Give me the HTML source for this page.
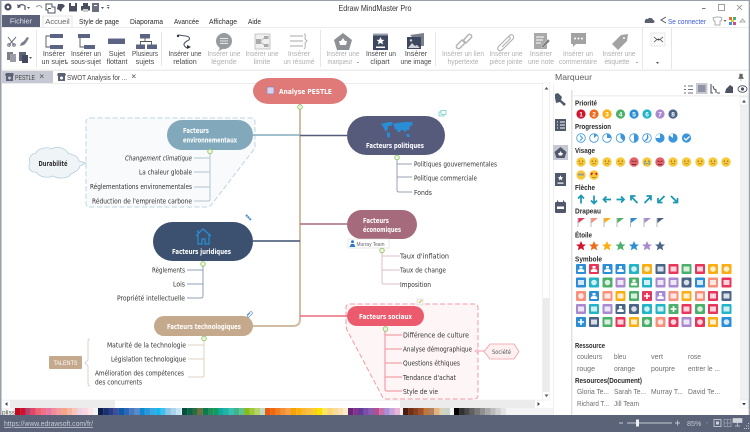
<!DOCTYPE html>
<html><head><meta charset="utf-8"><style>
html,body{margin:0;padding:0;background:#fff;width:750px;height:432px;overflow:hidden}
svg{display:block;filter:blur(.35px)}
text{font-family:"Liberation Sans",sans-serif}
.r{font-size:7.2px;fill:#4a4a4a;text-anchor:middle}
.g{font-size:7.2px;fill:#b0b0b0;text-anchor:middle}
.m{font-size:7.6px;fill:#2a2a2a}
.c{font-family:"DejaVu Sans",sans-serif;font-size:7px;fill:#333}
.w{font-family:"DejaVu Sans",sans-serif;font-size:7px;fill:#fff;font-weight:bold}
.l{font-size:7.4px;fill:#2a2a2a;font-weight:bold}
.i{font-size:7.4px;fill:#6e6e6e}
.ln{fill:none;stroke-width:1}
</style></head><body>
<svg width="750" height="432" viewBox="0 0 750 432" xmlns="http://www.w3.org/2000/svg">
<defs>
<g id="st"><polygon points="0,-5 1.5,-1.6 5,-1.4 2.3,.8 3.2,4.4 0,2.4 -3.2,4.4 -2.3,.8 -5,-1.4 -1.5,-1.6"/></g>
<g id="face"><circle r="4.7" fill="#f9c93c"/><circle cx="-1.7" cy="-.8" r=".7" fill="#8a6a20"/><circle cx="1.7" cy="-.8" r=".7" fill="#8a6a20"/><path d="M-2 1.8H2" stroke="#a07a20" stroke-width=".7"/></g>
<g id="pg"><circle r="4.3" fill="#fff" stroke="#3a95dc" stroke-width=".8"/></g>
<g id="sq"><rect x="-5" y="-5" width="10" height="10" rx="1"/></g>
<path id="person" d="M-1.5-3h3v2.500h-3zM-3.200 1l2-1h2.400l2 1v2h-6.400z" fill="#fff"/>
<path id="plus" d="M-3-.8H-.8V-3H.8V-.8H3V.8H.8V3H-.8V.8H-3z" fill="#fff"/>
<path id="box" d="M-3-2.500H3V2.500H-3z" fill="#fff" opacity=".8"/>
<circle id="dot" r="2.800" fill="#fff" opacity=".8"/>
</defs>

<!-- frame -->
<rect width="750" height="432" fill="#fff"/>
<rect width="750" height="1" fill="#9a9eab"/>
<rect width="1.500" height="415" fill="#9a9eab"/>
<rect x="748.700" width="1.300" height="415" fill="#9a9eab"/>

<!-- quick access -->
<g fill="#4a5060">
<circle cx="8" cy="7" r="3.600"/><circle cx="8" cy="7" r="1.300" fill="#fff"/>
<path d="M18 8c1-4 5-4 7-2v4" fill="none" stroke="#4a5060" stroke-width="1.200"/><path d="M17 4l1 4 3-1z"/>
<path d="M27 7h3l-1.500 2z"/>
<path d="M42 8c-1-3-4-3-6-1" fill="none" stroke="#9a9a9a" stroke-width="1"/>
<path d="M46 4h6v3h3v6h-7v-3h-2z" fill="none" stroke="#4a5060"/><path d="M48 8h3v1h-3z"/>
<path d="M58 4h5l2 2-3 3-1 3-2-2-2-1z"/>
<rect x="69" y="3" width="8" height="8.500"/><rect x="71" y="3" width="4" height="3" fill="#fff"/>
<rect x="81" y="6" width="9" height="4.500"/><rect x="83" y="3" width="5" height="3"/><rect x="83" y="9" width="5" height="3" fill="#ccc"/>
<rect x="92" y="3" width="7" height="9" fill="#6a7080"/><rect x="94" y="5" width="3" height="1" fill="#fff"/>
<path d="M101 7h3l-1.500 2zM107 7h2.500l-1.200 2z"/><rect x="107" y="5" width="2.500" height=".7"/>
</g>
<text x="375" y="11" font-size="8.200" fill="#333" text-anchor="middle" textLength="73" lengthAdjust="spacingAndGlyphs">Edraw MindMaster Pro</text>
<rect x="702" y="8" width="3.500" height="1" fill="#777"/>
<rect x="718.500" y="4.500" width="6" height="6" fill="none" stroke="#888" stroke-width=".8"/>
<path d="M737 5l5 5M742 5l-5 5" stroke="#888" stroke-width=".8"/>

<!-- menu -->
<rect x="2" y="15" width="38" height="12" fill="#5a6178"/>
<text x="21" y="23.500" font-size="7.400" fill="#dfe1e8" text-anchor="middle">Fichier</text>
<path d="M43 27V16h29v11" fill="#fff" stroke="#dcdcdc" stroke-width=".8"/>
<text x="57.500" y="24" class="m" text-anchor="middle" style="fill:#666">Accueil</text>
<text x="79" y="24" class="m" textLength="40" lengthAdjust="spacingAndGlyphs">Style de page</text>
<text x="130" y="24" class="m" textLength="33" lengthAdjust="spacingAndGlyphs">Diaporama</text>
<text x="174" y="24" class="m" textLength="25" lengthAdjust="spacingAndGlyphs">Avancée</text>
<text x="209" y="24" class="m" textLength="28" lengthAdjust="spacingAndGlyphs">Affichage</text>
<text x="248" y="24" class="m" textLength="13" lengthAdjust="spacingAndGlyphs">Aide</text>

<!-- top right -->
<path d="M645 23c-1-3 1-5 3-4 1-2 5-1 5 1 2 0 2 3 0 3z" fill="#5a6070"/>
<path d="M666 17l-5 3 5 3" fill="none" stroke="#555" stroke-width="1"/>
<text x="668" y="24" font-size="7.600" fill="#3c5ae0" textLength="38" lengthAdjust="spacingAndGlyphs">Se connecter</text>
<path d="M713 18l3-1h3l3 1-1 3h-1v4h-5v-4h-1z" fill="none" stroke="#999" stroke-width=".8"/>
<path d="M723.500 20h3l-1.500 2z" fill="#666"/>
<g><rect x="729" y="17" width="3" height="3" fill="#e86a3a"/><rect x="733" y="17" width="3" height="3" fill="#4cb06a"/><rect x="731" y="20" width="3" height="2" fill="#e8c23a"/><rect x="729" y="22" width="3" height="3" fill="#3a95dc"/><rect x="733" y="22" width="3" height="3" fill="#d04a8a"/></g>
<path d="M740 22l2.500-3 2.500 3z" fill="none" stroke="#999" stroke-width=".8"/>

<!-- ribbon -->
<rect x="1.500" y="27" width="747" height="1" fill="#ececec"/>
<rect x="1.500" y="69.500" width="747" height="1.500" fill="#ececec"/>
<g fill="#e6e6e6"><rect x="36" y="30" width="1" height="37"/><rect x="161" y="32" width="1" height="34"/><rect x="320" y="30" width="1" height="37"/><rect x="435" y="32" width="1" height="34"/><rect x="642" y="28" width="1" height="41"/><rect x="671" y="28" width="1" height="41"/></g>

<!-- clipboard -->
<path d="M8 37l6 8M16 37l-7 8" stroke="#6a7080" stroke-width="1" fill="none"/><circle cx="9" cy="45" r="1.300" fill="none" stroke="#6a7080"/><circle cx="14" cy="45" r="1.300" fill="none" stroke="#6a7080"/>
<path d="M27 37l-3 4-3 2-1 3 4-1 2-2 3-5z" fill="#7a8090"/>
<rect x="7" y="52" width="6" height="8" fill="#7c7f88"/><rect x="10" y="54" width="6" height="8" fill="#9a9da6"/>
<rect x="19" y="52" width="7" height="9" fill="#5d6478"/><rect x="22" y="55" width="6" height="8" fill="#434a60"/><path d="M29 57h3l-1.500 2z" fill="#555"/>

<!-- sujet icons -->
<g fill="#5c6484">
<rect x="50" y="34" width="13" height="4"/><rect x="50" y="45" width="13" height="4"/><path d="M50 36H46V47H50" fill="none" stroke="#555" stroke-width=".9"/>
<rect x="78" y="34" width="12" height="4"/><rect x="84" y="45" width="11" height="4"/><path d="M80 38V47H84" fill="none" stroke="#555" stroke-width=".9"/>
<rect x="108" y="38.500" width="17" height="5.500"/>
<rect x="140" y="34" width="10" height="4.500"/><rect x="136" y="44.500" width="9" height="4.500"/><rect x="147" y="44.500" width="10" height="4.500"/><path d="M145 38V42M140.500 44.500V41.500H151.500V44.500" fill="none" stroke="#555" stroke-width=".9"/>
</g>
<path d="M178 35c3 0 5 1 8 1 5 1 4 4 1 5-3 2-5 4 0 7" fill="none" stroke="#4c5264" stroke-width="1.100"/><circle cx="178" cy="36" r="1.200" fill="#333"/><path d="M191 47l-4-2 0 4z" fill="#333"/>
<circle cx="224" cy="41" r="8" fill="#979a9f"/><path d="M220 46l-1 5 5-3z" fill="#979a9f"/><path d="M220 38.500h8M220 41h8M220 43.500h8" stroke="#fff" stroke-width=".8"/>
<rect x="255" y="34" width="15" height="15" fill="#f0f0f0" stroke="#bbb" stroke-width=".8"/><rect x="264" y="36" width="4.500" height="3" fill="#aaa"/><rect x="264" y="44" width="4.500" height="3" fill="#aaa"/><rect x="256" y="39" width="5" height="5" fill="#aaa"/><path d="M261 41l3-3M261 42l3 3" stroke="#aaa" stroke-width=".7"/>
<path d="M290 36h13M290 41h13M290 46h13M304 34c2 0 1 3 1 5l2 2-2 2c0 2 1 5-1 6" fill="none" stroke="#a9a9a9" stroke-width=".9"/>
<path d="M343 33l9 7-3 10h-12l-3-10z" fill="#8d9094"/><path d="M343 38l2 3 2 0-1 4h-6l-1-4 2 0z" fill="#fff"/>
<rect x="373" y="35" width="15" height="15" fill="#3d4760"/><rect x="373" y="33.500" width="15" height="2" fill="#9aa0ae"/><use href="#st" fill="#fff" transform="translate(380.500 41) scale(.8)"/><rect x="376" y="46.500" width="9" height="1.500" fill="#fff"/>
<path d="M410 35l14-2v13h-3z" fill="#7a808c"/><rect x="407" y="37" width="14" height="12" fill="#3d4760"/><path d="M408 48l4-5 3 3 2-1 3 3z" fill="#cfd3dc"/><circle cx="411" cy="40.500" r="1.200" fill="#cfd3dc"/>
<g fill="none" stroke="#b4b4b4" stroke-width="1.500" stroke-linecap="round"><path d="M457 45l5-5 3 3-5 5c-2 2-5-1-3-3zM463 41l5-6c2-2 5 1 3 3l-5 5-3-3"/></g>
<path d="M499 46l10-10c3-3 6 0 4 3l-11 11c-3 2-6-1-3-4l9-9c1-1 3 1 2 2l-8 8" fill="none" stroke="#b0b0b0" stroke-width="1.100"/>
<rect x="534" y="33" width="13" height="16" fill="#a9a9a9"/><path d="M536 37h8M536 40h7M536 43h5" stroke="#fff" stroke-width=".9"/><path d="M541 47l7-8 2 2-7 7z" fill="#7c7c7c" stroke="#fff" stroke-width=".4"/>
<path d="M571 33h15v11h-10l-3 3v-3h-2z" fill="#a2a2a2"/><g fill="#fff"><circle cx="575" cy="38.500" r="1"/><circle cx="578.500" cy="38.500" r="1"/><circle cx="582" cy="38.500" r="1"/></g>
<path d="M628 34l-1 7-9 9-6-6 9-9z" fill="#a2a2a2"/><circle cx="624" cy="38" r="1" fill="#fff"/>
<rect x="651" y="33" width="14" height="13" fill="#fafafa" stroke="#e0e0e0" stroke-width=".7"/><path d="M654 37l3 2.500 3 0 3-2.500M654 42l3-2.500M663 42l-3-2.500" stroke="#444" stroke-width=".8" fill="none"/><circle cx="658.500" cy="39.500" r="1" fill="#444"/>
<path d="M656 62h3l-1.500 2z" fill="#555"/>

<!-- ribbon labels -->
<text class="r" x="54" y="56">Insérer</text><text class="r" x="54" y="64" textLength="25" lengthAdjust="spacingAndGlyphs">un sujet</text><rect x="66" y="62.500" width="2" height="1" fill="#555"/>
<text class="r" x="86" y="56" textLength="30" lengthAdjust="spacingAndGlyphs">Insérer un</text><text class="r" x="86" y="64" textLength="30" lengthAdjust="spacingAndGlyphs">sous-sujet</text>
<text class="r" x="117" y="56">Sujet</text><text class="r" x="117" y="64" textLength="21" lengthAdjust="spacingAndGlyphs">flottant</text>
<text class="r" x="145" y="56" textLength="26" lengthAdjust="spacingAndGlyphs">Plusieurs</text><text class="r" x="145" y="64">sujets</text>
<text class="r" x="185" y="56" textLength="33" lengthAdjust="spacingAndGlyphs">Insérer une</text><text class="r" x="185" y="64">relation</text>
<text class="g" x="224" y="56" textLength="33" lengthAdjust="spacingAndGlyphs">Insérer une</text><text class="g" x="224" y="64">légende</text>
<text class="g" x="262" y="56" textLength="33" lengthAdjust="spacingAndGlyphs">Insérer une</text><text class="g" x="262" y="64">limite</text>
<text class="g" x="299" y="56">Insérer</text><text class="g" x="299" y="64" textLength="31" lengthAdjust="spacingAndGlyphs">un résumé</text>
<text class="g" x="343" y="56" textLength="33" lengthAdjust="spacingAndGlyphs">Insérer une</text><text class="g" x="340" y="64" textLength="25" lengthAdjust="spacingAndGlyphs">marqueur</text><rect x="357" y="62" width="2" height="1" fill="#aaa"/>
<text class="r" x="381" y="56" textLength="30" lengthAdjust="spacingAndGlyphs">Insérer un</text><text class="r" x="380" y="64">clipart</text>
<text class="r" x="416" y="56">Insérer</text><text class="r" x="416" y="64" textLength="31" lengthAdjust="spacingAndGlyphs">une image</text>
<text class="g" x="463" y="56" textLength="42" lengthAdjust="spacingAndGlyphs">Insérer un lien</text><text class="g" x="463" y="64" textLength="31" lengthAdjust="spacingAndGlyphs">hypertexte</text>
<text class="g" x="506" y="56" textLength="33" lengthAdjust="spacingAndGlyphs">Insérer une</text><text class="g" x="506" y="64" textLength="33" lengthAdjust="spacingAndGlyphs">pièce jointe</text>
<text class="g" x="541" y="56">Insérer</text><text class="g" x="541" y="64" textLength="26" lengthAdjust="spacingAndGlyphs">une note</text>
<text class="g" x="578" y="56" textLength="30" lengthAdjust="spacingAndGlyphs">Insérer un</text><text class="g" x="578" y="64" textLength="38" lengthAdjust="spacingAndGlyphs">commentaire</text>
<text class="g" x="619" y="56" textLength="33" lengthAdjust="spacingAndGlyphs">Insérer une</text><text class="g" x="617" y="64" textLength="25" lengthAdjust="spacingAndGlyphs">étiquette</text><rect x="636" y="62" width="2" height="1" fill="#aaa"/>

<!-- doc tabs -->
<rect x="2" y="71" width="51" height="12" fill="#c6c9d3"/>
<path d="M6 73h7l1 2-1 1v5H6v-5l-1-1z" fill="#5b6275"/><circle cx="9.500" cy="78" r="1.500" fill="#c6c9d3"/>
<text x="15" y="80" font-size="7.200" fill="#444" textLength="20" lengthAdjust="spacingAndGlyphs">PESTLE</text>
<path d="M40 74.500l3.500 3.500M43.500 74.500L40 78" stroke="#555" stroke-width=".7"/>
<path d="M58 73h7l1 2-1 1v5h-7v-5l-1-1z" fill="#5b6275"/><circle cx="61.500" cy="78" r="1.500" fill="#fff"/>
<text x="67" y="80" font-size="7.400" fill="#444" textLength="60" lengthAdjust="spacingAndGlyphs">SWOT Analysis for ...</text>
<path d="M132 74.500l3.500 3.500M135.500 74.500L132 78" stroke="#555" stroke-width=".7"/>
<rect x="1.500" y="83" width="541" height=".8" fill="#e8e8e8"/>

<!-- Panel title -->
<text x="555" y="80" font-size="8.600" fill="#5c5c5c" textLength="37" lengthAdjust="spacingAndGlyphs">Marqueur</text>
<path d="M739.500 74h3v3l1 1v.6h-5V78l1-1zM741 79v2" fill="#666" stroke="#666" stroke-width=".4"/>

<!-- ===== Canvas ===== -->
<path d="M90 118H251q4 0 4 4V148L212 204q-2 3-5 3H90q-4 0-4-4V122q0-4 4-4z" fill="#f8fafb" stroke="#bcd5e3" stroke-width="1" stroke-dasharray="5 2.500"/>
<path d="M350 304H474q4 0 4 4V395q0 4-4 4H386q-3 0-4-3L347 330q-1-3-1-5V308q0-4 4-4z" fill="#fef6f6" stroke="#f29aa5" stroke-width="1" stroke-dasharray="5 2.500"/>

<path d="M300 104V319q0 7-7 7H253" fill="none" stroke="#d2bca4" stroke-width="2"/>
<path d="M253 135H300" stroke="#84abbd" stroke-width="1.500"/>
<path d="M300 135.500H347" stroke="#565b7c" stroke-width="1.500"/>
<path d="M300 224H347" stroke="#a56b7c" stroke-width="1.500"/>
<path d="M253 241H300" stroke="#3c5170" stroke-width="1.500"/>
<path d="M300 316H347" stroke="#ec6b7c" stroke-width="1.500"/>

<path class="ln" stroke="#afc5d0" d="M210 153V199q0 2-2 2H194M194 158H210M194 172H210M194 187H210"/>
<path class="ln" stroke="#9aa0b6" d="M397 160V190q0 2 2 2H412M397 164H412M397 177H412"/>
<path class="ln" stroke="#dcbfc9" d="M382 252V282q0 2 2 2H400M382 256H400M382 270H400"/>
<path class="ln" stroke="#f08a96" d="M385 331V389q0 2 2 2H402M385 335H402M385 349H402M385 363H402M385 377H402"/>
<path class="ln" stroke="#8f9fb4" d="M203 266V296q0 2-2 2H187M187 270H203M187 284H203"/>
<path class="ln" stroke="#e0d3c3" d="M204 340V375q0 2-2 2H188M188 345H204M188 359H204"/>
<path class="ln" stroke="#d9d2c8" d="M90 339q-2 0-2 3V360l-3 3 3 3V383q0 3 2 3"/>
<path d="M478 351H484" stroke="#f29aa5" stroke-width="1"/><path d="M478 349l-3 2 3 2" fill="none" stroke="#f29aa5" stroke-width=".7"/>

<path d="M86 163L79 161C78 155 72 155 68 153C64 147 56 146 52 149C47 146 37 149 36 153C31 154 28 158 30 163C27 168 31 173 36 172C40 178 49 178 53 176C58 179 68 179 71 174C75 172 79 170 80 166z" fill="#eff4f7" stroke="#b6cfdf" stroke-width=".8"/>
<text x="38.500" y="166" class="c" style="font-weight:bold;fill:#333" textLength="29" lengthAdjust="spacingAndGlyphs">Durabilité</text>

<rect x="253" y="78" width="94" height="26" rx="16" fill="#e07a78"/>
<rect x="267" y="87" width="7" height="7" rx="1" fill="#d8d0ec" stroke="#8f86b8" stroke-width=".7"/>
<text x="279" y="94" class="w" textLength="53" lengthAdjust="spacingAndGlyphs">Analyse PESTLE</text>

<rect x="167" y="120" width="86" height="30" rx="15" fill="#82a9bb"/>
<text x="183" y="133" class="w" textLength="26" lengthAdjust="spacingAndGlyphs">Facteurs</text>
<text x="183" y="142.500" class="w" textLength="54" lengthAdjust="spacingAndGlyphs">environnementaux</text>

<rect x="347" y="116" width="98" height="39" rx="19.500" fill="#565b7c"/>
<path d="M381 124l4-1 3-1 3 0 2 1-2 3-3 0 0 3-2 2-1 0-1-3zM387 132l3 1 0 4-2 1-1-3zM393 124l4-1 8-1 7 0 1 3-3 1-1 4-2 0-2 2-2-2-2 0-1 2-2 0-1-2-2-1-1-3zM406 134l3 0 1 3-3 0z" fill="#2a8ed6"/>
<text x="366" y="148" class="w" textLength="58" lengthAdjust="spacingAndGlyphs">Facteurs politiques</text>
<rect x="439" y="112" width="5" height="4" fill="#fff" stroke="#60c8c8" stroke-width=".7"/><rect x="441" y="110.500" width="5" height="4" fill="#fff" stroke="#60c8c8" stroke-width=".7"/>

<rect x="347" y="210" width="70" height="29" rx="14.500" fill="#a56b7c"/>
<text x="363" y="223" class="w" textLength="26" lengthAdjust="spacingAndGlyphs">Facteurs</text>
<text x="363" y="232" class="w" textLength="38" lengthAdjust="spacingAndGlyphs">économiques</text>
<rect x="348" y="239" width="41" height="9" fill="#fff" stroke="#d8d8d8" stroke-width=".6"/>
<circle cx="352.500" cy="241.800" r="1.500" fill="#2a7cc8"/><path d="M349.500 247l1.500-3h3l1.500 3z" fill="#2a7cc8"/>
<text x="356.500" y="246" font-size="5.600" fill="#666" textLength="28" lengthAdjust="spacingAndGlyphs">Murray Team</text>

<rect x="347" y="306" width="77" height="20" rx="10" fill="#ec5b6d"/>
<text x="359" y="319" class="w" textLength="53" lengthAdjust="spacingAndGlyphs">Facteurs sociaux</text>
<rect x="417" y="299" width="6" height="6" fill="#f6f6f6" stroke="#ccc" stroke-width=".5"/><path d="M419 303l3-3" stroke="#e8b83a" stroke-width="1"/>
<path d="M490 344H514L519 351.500 514 359H490L484 351.500z" fill="#fef0f0" stroke="#f29aa5" stroke-width=".8"/>
<text x="492" y="354" class="c" style="font-size:6px;fill:#555" textLength="19" lengthAdjust="spacingAndGlyphs">Société</text>

<rect x="153" y="222" width="100" height="39" rx="19.500" fill="#3c5170"/>
<path d="M196 236l7-7 8 7M198 235v9h4v-5h3v5h4v-9M197 231l1 0 0 3" fill="none" stroke="#2a8ed6" stroke-width="1.200"/>
<text x="172" y="254" class="w" textLength="59" lengthAdjust="spacingAndGlyphs">Facteurs juridiques</text>
<path d="M246 215l5 5" stroke="#4a90d0" stroke-width="2" stroke-dasharray="2 .5"/>

<rect x="154" y="316" width="99" height="20" rx="10" fill="#c4a98c"/>
<text x="167" y="329" class="w" textLength="74" lengthAdjust="spacingAndGlyphs">Facteurs technologiques</text>
<path d="M247 315l3-3c1.500-1 3 .5 2 2l-3 3c-1 .8-2.500-.5-1.500-1.500l2.500-2.500" fill="none" stroke="#5a90c8" stroke-width=".7"/>

<rect x="49" y="356" width="33" height="13" rx="1" fill="#c4a98c"/>
<text x="53.500" y="365" font-size="6.500" fill="#fff" textLength="24" lengthAdjust="spacingAndGlyphs">TALENTS</text>

<g fill="#eaf6e0" stroke="#8cc05c" stroke-width=".8">
<circle cx="300" cy="107" r="2.300"/><circle cx="210" cy="151.500" r="2.300"/><circle cx="397" cy="157.500" r="2.300"/><circle cx="382" cy="250.500" r="2.300"/><circle cx="385.500" cy="329" r="2.300"/><circle cx="203" cy="264" r="2.300"/><circle cx="204" cy="338.500" r="2.300"/>
</g>

<text class="c" x="125" y="160.500" textLength="67" lengthAdjust="spacingAndGlyphs" font-style="italic">Changement climatique</text>
<text class="c" x="139" y="174.500" textLength="53" lengthAdjust="spacingAndGlyphs">La chaleur globale</text>
<text class="c" x="90" y="189" textLength="102" lengthAdjust="spacingAndGlyphs">Réglementations environementales</text>
<text class="c" x="92" y="203.500" textLength="100" lengthAdjust="spacingAndGlyphs">Réduction de l'empreinte carbone</text>
<text class="c" x="414" y="166.500" textLength="83" lengthAdjust="spacingAndGlyphs">Politiques gouvernementales</text>
<text class="c" x="414" y="180.500" textLength="63" lengthAdjust="spacingAndGlyphs">Politique commerciale</text>
<text class="c" x="414" y="195" textLength="18" lengthAdjust="spacingAndGlyphs">Fonds</text>
<text class="c" x="400" y="258.500" textLength="49" lengthAdjust="spacingAndGlyphs">Taux d'inflation</text>
<text class="c" x="400" y="272.500" textLength="46" lengthAdjust="spacingAndGlyphs">Taux de change</text>
<text class="c" x="400" y="287" textLength="31" lengthAdjust="spacingAndGlyphs">Imposition</text>
<text class="c" x="403" y="337.500" textLength="66" lengthAdjust="spacingAndGlyphs">Différence de culture</text>
<text class="c" x="403" y="351.500" textLength="69" lengthAdjust="spacingAndGlyphs">Analyse démographique</text>
<text class="c" x="403" y="365.500" textLength="57" lengthAdjust="spacingAndGlyphs">Questions éthiques</text>
<text class="c" x="403" y="380" textLength="53" lengthAdjust="spacingAndGlyphs">Tendance d'achat</text>
<text class="c" x="403" y="394" textLength="35" lengthAdjust="spacingAndGlyphs">Style de vie</text>
<text class="c" x="152" y="272.500" textLength="33" lengthAdjust="spacingAndGlyphs">Règlements</text>
<text class="c" x="173" y="286.500" textLength="12" lengthAdjust="spacingAndGlyphs">Lois</text>
<text class="c" x="117" y="300.500" textLength="68" lengthAdjust="spacingAndGlyphs">Propriété intellectuelle</text>
<text class="c" x="107" y="347.500" textLength="79" lengthAdjust="spacingAndGlyphs">Maturité de la technologie</text>
<text class="c" x="111" y="361.500" textLength="75" lengthAdjust="spacingAndGlyphs">Législation technologique</text>
<text class="c" x="95" y="375.500" textLength="89" lengthAdjust="spacingAndGlyphs">Amélioration des compétences</text>
<text class="c" x="95" y="384.500" textLength="47" lengthAdjust="spacingAndGlyphs">des concurrents</text>

<!-- canvas scrollbars -->
<rect x="542.500" y="83" width="7" height="317" fill="#fff" stroke="#e6e6e6" stroke-width=".6"/>
<rect x="543" y="298" width="6.500" height="94" fill="#ececec"/>
<path d="M544.500 89.500l2-2.500 2 2.500z" fill="#555"/>
<path d="M544.500 394.500l2 2.500 2-2.500z" fill="#555"/>
<rect x="2" y="400" width="541" height="8" fill="#fff"/>
<rect x="2" y="399.800" width="541" height=".6" fill="#e4e4e4"/>
<rect x="10" y="400" width="105" height="8" fill="#ececec"/>
<rect x="400" y="400" width="135" height="8" fill="#ececec"/>
<path d="M7.500 402l-2.500 2 2.500 2z" fill="#444"/><path d="M537.500 402l2.500 2-2.500 2z" fill="#444"/>

<!-- colour strip -->
<rect x="1.500" y="408" width="552" height="7.200" fill="#f4f4f4"/>
<text x="2" y="414.500" font-size="6.500" fill="#555" textLength="13" lengthAdjust="spacingAndGlyphs">pliss</text>
<g>
<rect x="15" y="408" width="5.300" height="7.200" fill="#c00a20"/><rect x="20.200" y="408" width="5.300" height="7.200" fill="#d01030"/><rect x="25.400" y="408" width="5.300" height="7.200" fill="#b8406e"/><rect x="30.600" y="408" width="5.300" height="7.200" fill="#e04866"/><rect x="35.800" y="408" width="5.300" height="7.200" fill="#ec6478"/><rect x="41" y="408" width="5.300" height="7.200" fill="#f07088"/><rect x="46.200" y="408" width="5.300" height="7.200" fill="#e878a4"/><rect x="51.400" y="408" width="5.300" height="7.200" fill="#f08c9c"/><rect x="56.600" y="408" width="5.300" height="7.200" fill="#f49c9c"/><rect x="61.800" y="408" width="5.300" height="7.200" fill="#f8a488"/><rect x="67" y="408" width="5.300" height="7.200" fill="#f8b4a0"/><rect x="72.200" y="408" width="5.300" height="7.200" fill="#f8c4bc"/><rect x="77.400" y="408" width="5.300" height="7.200" fill="#ead4e4"/><rect x="82.600" y="408" width="5.300" height="7.200" fill="#fcd4e0"/><rect x="87.800" y="408" width="5.300" height="7.200" fill="#fce4ec"/>
<rect x="98" y="408" width="5.300" height="7.200" fill="#0c2050"/><rect x="103.200" y="408" width="5.300" height="7.200" fill="#1a3070"/><rect x="108.400" y="408" width="5.300" height="7.200" fill="#2c3c88"/><rect x="113.600" y="408" width="5.300" height="7.200" fill="#3a5098"/><rect x="118.800" y="408" width="5.300" height="7.200" fill="#0c5aa8"/><rect x="124" y="408" width="5.300" height="7.200" fill="#2868b4"/><rect x="129.200" y="408" width="5.300" height="7.200" fill="#4878c0"/><rect x="134.400" y="408" width="5.300" height="7.200" fill="#5a8ccc"/><rect x="139.600" y="408" width="5.300" height="7.200" fill="#1088d0"/><rect x="144.800" y="408" width="5.300" height="7.200" fill="#2898dc"/><rect x="150" y="408" width="5.300" height="7.200" fill="#38a8e0"/><rect x="155.200" y="408" width="5.300" height="7.200" fill="#18b4ec"/><rect x="160.400" y="408" width="5.300" height="7.200" fill="#40c0f0"/><rect x="165.600" y="408" width="5.300" height="7.200" fill="#90c4e4"/><rect x="170.800" y="408" width="5.300" height="7.200" fill="#a8d4ec"/><rect x="176" y="408" width="5.300" height="7.200" fill="#c8e4f4"/>
<rect x="182" y="408" width="5.300" height="7.200" fill="#04503c"/><rect x="187.200" y="408" width="5.300" height="7.200" fill="#0c6448"/><rect x="192.400" y="408" width="5.300" height="7.200" fill="#2c6c40"/><rect x="197.600" y="408" width="5.300" height="7.200" fill="#70703c"/><rect x="202.800" y="408" width="5.300" height="7.200" fill="#0c7c50"/><rect x="208" y="408" width="5.300" height="7.200" fill="#209058"/><rect x="213.200" y="408" width="5.300" height="7.200" fill="#109c5c"/><rect x="218.400" y="408" width="5.300" height="7.200" fill="#10a8a0"/><rect x="223.600" y="408" width="5.300" height="7.200" fill="#20b4a4"/><rect x="228.800" y="408" width="5.300" height="7.200" fill="#38c0b0"/><rect x="234" y="408" width="5.300" height="7.200" fill="#40b488"/><rect x="239.200" y="408" width="5.300" height="7.200" fill="#60c090"/><rect x="244.400" y="408" width="5.300" height="7.200" fill="#88bc14"/><rect x="249.600" y="408" width="5.300" height="7.200" fill="#a0c83c"/><rect x="254.800" y="408" width="5.300" height="7.200" fill="#b8d468"/><rect x="260" y="408" width="5.300" height="7.200" fill="#c0dcc0"/>
<rect x="265" y="408" width="5.300" height="7.200" fill="#e85a14"/><rect x="270.200" y="408" width="5.300" height="7.200" fill="#f0680c"/><rect x="275.400" y="408" width="5.300" height="7.200" fill="#f07c24"/><rect x="280.600" y="408" width="5.300" height="7.200" fill="#f49034"/><rect x="285.800" y="408" width="5.300" height="7.200" fill="#f8a048"/><rect x="291" y="408" width="5.300" height="7.200" fill="#f8a400"/><rect x="296.200" y="408" width="5.300" height="7.200" fill="#fcb010"/><rect x="301.400" y="408" width="5.300" height="7.200" fill="#fcb830"/><rect x="306.600" y="408" width="5.300" height="7.200" fill="#fcc040"/><rect x="311.800" y="408" width="5.300" height="7.200" fill="#fcd020"/><rect x="317" y="408" width="5.300" height="7.200" fill="#fce000"/><rect x="322.200" y="408" width="5.300" height="7.200" fill="#fce860"/><rect x="327.400" y="408" width="5.300" height="7.200" fill="#fcd47c"/><rect x="332.600" y="408" width="5.300" height="7.200" fill="#fcdc94"/><rect x="337.800" y="408" width="5.300" height="7.200" fill="#f8e0b0"/><rect x="343" y="408" width="5.300" height="7.200" fill="#fcecc8"/>
<rect x="348" y="408" width="5.300" height="7.200" fill="#6c2478"/><rect x="353.200" y="408" width="5.300" height="7.200" fill="#84348c"/><rect x="358.400" y="408" width="5.300" height="7.200" fill="#5c3c98"/><rect x="363.600" y="408" width="5.300" height="7.200" fill="#7c4ca8"/><rect x="368.800" y="408" width="5.300" height="7.200" fill="#8c5cb0"/><rect x="374" y="408" width="5.300" height="7.200" fill="#b84c90"/><rect x="379.200" y="408" width="5.300" height="7.200" fill="#c870a8"/><rect x="384.400" y="408" width="5.300" height="7.200" fill="#a890d8"/><rect x="389.600" y="408" width="5.300" height="7.200" fill="#c8a4d8"/><rect x="394.800" y="408" width="5.300" height="7.200" fill="#e8b4d8"/>
<rect x="403" y="408" width="5.300" height="7.200" fill="#4c1c10"/><rect x="408.200" y="408" width="5.300" height="7.200" fill="#703018"/><rect x="413.400" y="408" width="5.300" height="7.200" fill="#844020"/><rect x="418.600" y="408" width="5.300" height="7.200" fill="#a05024"/><rect x="423.800" y="408" width="5.300" height="7.200" fill="#c07838"/><rect x="429" y="408" width="5.300" height="7.200" fill="#b08060"/><rect x="434.200" y="408" width="5.300" height="7.200" fill="#e4b47c"/><rect x="439.400" y="408" width="5.300" height="7.200" fill="#d8d0b8"/><rect x="444.600" y="408" width="5.300" height="7.200" fill="#c8d4c8"/>
<rect x="454" y="408" width="5.300" height="7.200" fill="#000"/><rect x="459.200" y="408" width="5.300" height="7.200" fill="#303030"/><rect x="464.400" y="408" width="5.300" height="7.200" fill="#484848"/><rect x="469.600" y="408" width="5.300" height="7.200" fill="#606060"/><rect x="474.800" y="408" width="5.300" height="7.200" fill="#787878"/><rect x="480" y="408" width="5.300" height="7.200" fill="#909090"/><rect x="485.200" y="408" width="5.300" height="7.200" fill="#a8a8a8"/><rect x="490.400" y="408" width="5.300" height="7.200" fill="#bcbcbc"/><rect x="495.600" y="408" width="5.300" height="7.200" fill="#d0d0d0"/><rect x="500.800" y="408" width="5.300" height="7.200" fill="#e4e4e4"/>
</g>

<!-- ===== Right panel ===== -->
<rect x="553" y="84" width="1" height="331" fill="#f0f0f0"/>
<rect x="571" y="90" width="1.500" height="325" fill="#e2e2e2"/>
<rect x="571" y="95.500" width="178" height=".8" fill="#e6e6e6"/>
<path d="M684 86h2M684 89.500h2M684 93h2M688 86h5M688 89.500h5M688 93h5" stroke="#6a7080" stroke-width="1.100"/>
<rect x="696" y="83" width="11.500" height="11" fill="#c6c9d3"/><rect x="698" y="85" width="7.500" height="7" fill="#8e94a6"/>
<path d="M711 84v9h2M713 86l1 3 2 1 0 3M717 93h3" fill="none" stroke="#4c5264" stroke-width="1.100"/>
<path d="M725 93l1-4 4-4 3 2v6z" fill="#4c5264"/>
<ellipse cx="742.500" cy="89" rx="4.500" ry="3.300" fill="none" stroke="#4c5264" stroke-width=".9"/><circle cx="742.500" cy="89" r="1.600" fill="#4c5264"/>
<!-- side icons -->
<path d="M555 94l3-1 4 4-1 3 5 4-2 2-4-4-4 1-1-5z" fill="#50586c"/>
<rect x="555" y="119" width="11" height="12" fill="#50586c"/><path d="M557 122h1M560 122h5M557 125h1M560 125h5M557 128h1M560 128h5" stroke="#fff" stroke-width="1"/>
<rect x="553" y="145" width="15" height="15" fill="#c6c9d3"/><path d="M560.500 147l6 5-2 6h-8l-2-6z" fill="#50586c"/><path d="M560.500 151l1 2h1.500l-1 2.500h-3l-1-2.500h1.500z" fill="#fff"/>
<rect x="555" y="173" width="11" height="13" fill="#50586c"/><use href="#st" fill="#fff" transform="translate(560.500 178) scale(.55)"/><rect x="557.500" y="182.500" width="6" height="1.200" fill="#fff"/>
<rect x="555" y="202" width="11" height="11" rx="1" fill="#50586c"/><rect x="557" y="200.500" width="1.200" height="3" fill="#50586c"/><rect x="563" y="200.500" width="1.200" height="3" fill="#50586c"/><rect x="557" y="206.500" width="7" height="2.500" fill="#fff"/>

<!-- panel scrollbar -->
<rect x="740" y="96" width="8" height="312" fill="#f0f0f0"/>
<rect x="740" y="97" width="8" height="8" fill="#fff" stroke="#e2e2e2" stroke-width=".5"/><path d="M742 102.500l2-2.500 2 2.500z" fill="#444"/>
<rect x="740" y="400" width="8" height="8" fill="#fff" stroke="#e2e2e2" stroke-width=".5"/><path d="M742 403l2 2.500 2-2.500z" fill="#444"/>

<!-- Priorité -->
<text class="l" x="575" y="105.500" textLength="22" lengthAdjust="spacingAndGlyphs">Priorité</text>
<g font-size="6.500" fill="#fff" text-anchor="middle" font-weight="bold">
<circle cx="581" cy="114" r="4.600" fill="#d0142c"/><text x="581" y="116.400">1</text>
<circle cx="594" cy="114" r="4.600" fill="#f06a1c"/><text x="594" y="116.400">2</text>
<circle cx="607" cy="114" r="4.600" fill="#f9ae14"/><text x="607" y="116.400">3</text>
<circle cx="620.500" cy="114" r="4.600" fill="#4cb06a"/><text x="620.500" y="116.400">4</text>
<circle cx="634" cy="114" r="4.600" fill="#2d8ed8"/><text x="634" y="116.400">5</text>
<circle cx="647" cy="114" r="4.600" fill="#22b5c8"/><text x="647" y="116.400">6</text>
<circle cx="660" cy="114" r="4.600" fill="#a98ad0"/><text x="660" y="116.400">7</text>
<circle cx="673" cy="114" r="4.600" fill="#4a6488"/><text x="673" y="116.400">8</text>
</g>
<!-- Progression -->
<text class="l" x="575" y="129" textLength="36" lengthAdjust="spacingAndGlyphs">Progression</text>
<use href="#pg" x="581" y="138"/><path d="M580 135.500l2.500 2.500-2.500 2.500" fill="none" stroke="#3a95dc" stroke-width="1"/>
<use href="#pg" x="594" y="138"/><path d="M594 138V134A4 4 0 0 1 597 135.500z" fill="#3a95dc"/>
<use href="#pg" x="607" y="138"/><path d="M607 138V134A4 4 0 0 1 611 138z" fill="#3a95dc"/>
<use href="#pg" x="620.500" y="138"/><path d="M620.500 138V134A4 4 0 0 1 623.500 141z" fill="#3a95dc"/>
<use href="#pg" x="634" y="138"/><path d="M634 134A4 4 0 0 1 634 142z" fill="#3a95dc"/>
<use href="#pg" x="647" y="138"/><path d="M647 134A4 4 0 0 1 644 141L647 138z" fill="#3a95dc"/>
<circle cx="660" cy="138" r="4.600" fill="#3a95dc"/><path d="M660 138H655.700A4.300 4.300 0 0 1 660 133.700z" fill="#fff"/>
<circle cx="673" cy="138" r="4.600" fill="#3a95dc"/><path d="M673 138V133.700A4.300 4.300 0 0 0 669.500 135.500z" fill="#fff"/>
<circle cx="686.500" cy="138" r="4.600" fill="#3a95dc"/><path d="M684 138l2 2 3.500-3.500" fill="none" stroke="#fff" stroke-width="1.300"/>
<!-- Visage -->
<text class="l" x="575" y="153" textLength="20" lengthAdjust="spacingAndGlyphs">Visage</text>
<use href="#face" x="581" y="162"/><use href="#face" x="594" y="162"/><use href="#face" x="607" y="162"/><use href="#face" x="620.500" y="162"/>
<circle cx="634" cy="162" r="4.700" fill="#e2606a"/><path d="M631.500 161l2 .5M636.500 161l-2 .5M632 164.500h4" stroke="#5a2020" stroke-width=".8"/>
<use href="#face" x="647" y="162"/><path d="M644.500 161v4M649.500 161v4" stroke="#5ab0e0" stroke-width="1"/>
<circle cx="660" cy="162" r="4.700" fill="#e2606a"/><path d="M657.500 161l2 .5M662.500 161l-2 .5M658 164.500h4" stroke="#5a2020" stroke-width=".8"/>
<use href="#face" x="673" y="162"/><use href="#face" x="686.500" y="162"/><use href="#face" x="700" y="162"/><use href="#face" x="713" y="162"/><use href="#face" x="726" y="162"/>
<circle cx="581" cy="175" r="4.700" fill="#f9c93c"/><rect x="578" y="173.500" width="6" height="2" fill="#999"/>
<circle cx="594" cy="175" r="4.700" fill="#f9c93c"/><path d="M590.500 173.500l1.500-1 1 1-1.500 2zM597.500 173.500l-1.500-1-1 1 1.500 2z" fill="#d0142c"/><path d="M592 177.500h4" stroke="#a07a20" stroke-width=".7"/>
<!-- Fleche -->
<text class="l" x="575" y="190" textLength="20" lengthAdjust="spacingAndGlyphs">Flèche</text>
<g fill="none" stroke="#1a98b0" stroke-width="1.700">
<path d="M581 203.500V195.500M578 198.500L581 195.500L584 198.500"/>
<path d="M594 195.500V203.500M591 200.500L594 203.500L597 200.500"/>
<path d="M611 199.500H603.500M606.500 196.500L603.500 199.500L606.500 202.500"/>
<path d="M616.500 199.500H624M621 196.500L624 199.500L621 202.500"/>
<path d="M637.500 203L631 196.500M631 200.500V196H635.500"/>
<path d="M644.500 203L651 196.500M646.500 196H651V200.500"/>
<path d="M664.500 196L658 202.500M658 198V202.500H662.500"/>
<path d="M671 196L677.500 202.500M673 202.500H677.500V198"/>
</g>
<!-- Drapeau -->
<text class="l" x="575" y="213.500" textLength="26" lengthAdjust="spacingAndGlyphs">Drapeau</text>
<g stroke="#aaa" stroke-width=".8"><path d="M578 218V227M591 218V227M604 218V227M617 218V227M630.500 218V227M644 218V227M657 218V227"/></g>
<path d="M578.500 218H585L578.500 223z" fill="#e8365a"/><path d="M591.500 218H598L591.500 223z" fill="#f8907c"/><path d="M604.500 218H611L604.500 223z" fill="#f9ae14"/><path d="M617.500 218H624L617.500 223z" fill="#4cb06a"/><path d="M631 218H637.500L631 223z" fill="#2d8ed8"/><path d="M644.500 218H651L644.500 223z" fill="#a98ad0"/><path d="M657.500 218H664L657.500 223z" fill="#4a6488"/>
<!-- Etoile -->
<text class="l" x="575" y="237.500" textLength="17" lengthAdjust="spacingAndGlyphs">Étoile</text>
<use href="#st" transform="translate(581 246)" fill="#d0142c"/><use href="#st" transform="translate(594 246)" fill="#f06a1c"/><use href="#st" transform="translate(607 246)" fill="#f9ae14"/><use href="#st" transform="translate(620.500 246)" fill="#4cb06a"/><use href="#st" transform="translate(634 246)" fill="#2d8ed8"/><use href="#st" transform="translate(647 246)" fill="#a98ad0"/><use href="#st" transform="translate(660 246)" fill="#4a6488"/>
<!-- Symbole -->
<text class="l" x="575" y="261.500" textLength="27" lengthAdjust="spacingAndGlyphs">Symbole</text>
<g>
<g fill="#2d8ed8"><use href="#sq" x="581" y="269"/><use href="#sq" x="607.500" y="269"/><use href="#sq" x="620.500" y="269"/><use href="#sq" x="581" y="282.500"/><use href="#sq" x="700" y="282.500"/><use href="#sq" x="594" y="296"/><use href="#sq" x="581" y="322"/><use href="#sq" x="726.500" y="322"/></g>
<g fill="#e8365a"><use href="#sq" x="594" y="269"/><use href="#sq" x="673.500" y="269"/><use href="#sq" x="700" y="269"/><use href="#sq" x="726.500" y="282.500"/><use href="#sq" x="647" y="296"/><use href="#sq" x="713" y="296"/><use href="#sq" x="686.500" y="309"/><use href="#sq" x="713" y="309"/><use href="#sq" x="620.500" y="322"/><use href="#sq" x="673.500" y="322"/><use href="#sq" x="700" y="322"/></g>
<g fill="#22b5c8"><use href="#sq" x="634" y="269"/><use href="#sq" x="594" y="282.500"/><use href="#sq" x="647" y="282.500"/><use href="#sq" x="594" y="309"/><use href="#sq" x="647" y="309"/><use href="#sq" x="660.500" y="309"/><use href="#sq" x="726.500" y="309"/></g>
<g fill="#f9ae14"><use href="#sq" x="647" y="269"/><use href="#sq" x="713" y="269"/><use href="#sq" x="726.500" y="269"/><use href="#sq" x="620.500" y="296"/><use href="#sq" x="686.500" y="296"/><use href="#sq" x="634" y="322"/><use href="#sq" x="713" y="322"/></g>
<g fill="#4a6488"><use href="#sq" x="660.500" y="269"/><use href="#sq" x="686.500" y="282.500"/><use href="#sq" x="726.500" y="296"/><use href="#sq" x="620.500" y="309"/><use href="#sq" x="634" y="309"/><use href="#sq" x="594" y="322"/></g>
<g fill="#4cb06a"><use href="#sq" x="686.500" y="269"/><use href="#sq" x="607.500" y="282.500"/><use href="#sq" x="634" y="282.500"/><use href="#sq" x="634" y="296"/><use href="#sq" x="673.500" y="309"/><use href="#sq" x="700" y="309"/><use href="#sq" x="607.500" y="322"/><use href="#sq" x="647" y="322"/></g>
<g fill="#a98ad0"><use href="#sq" x="620.500" y="282.500"/><use href="#sq" x="660.500" y="282.500"/><use href="#sq" x="673.500" y="282.500"/><use href="#sq" x="660.500" y="296"/><use href="#sq" x="581" y="309"/><use href="#sq" x="607.500" y="309"/><use href="#sq" x="686.500" y="322"/></g>
<g fill="#f8907c"><use href="#sq" x="713" y="282.500"/><use href="#sq" x="581" y="296"/><use href="#sq" x="607.500" y="296"/><use href="#sq" x="673.500" y="296"/><use href="#sq" x="700" y="296"/><use href="#sq" x="660.500" y="322"/></g>
</g>
<g>
<use href="#person" x="581" y="269"/><use href="#person" x="594" y="269"/><use href="#person" x="607.500" y="269"/><use href="#person" x="620.500" y="269"/><use href="#dot" x="634" y="269"/><use href="#dot" x="647" y="269"/><use href="#box" x="660.500" y="269"/><use href="#box" x="673.500" y="269"/><use href="#box" x="686.500" y="269"/><use href="#box" x="700" y="269"/><use href="#dot" x="713" y="269"/><use href="#dot" x="726.500" y="269"/>
<use href="#box" x="581" y="282.500"/><use href="#dot" x="594" y="282.500"/><use href="#dot" x="607.500" y="282.500"/><use href="#box" x="620.500" y="282.500"/><use href="#person" x="634" y="282.500"/><use href="#box" x="647" y="282.500"/><use href="#box" x="660.500" y="282.500"/><use href="#box" x="673.500" y="282.500"/><use href="#dot" x="686.500" y="282.500"/><use href="#box" x="700" y="282.500"/><use href="#box" x="713" y="282.500"/><use href="#box" x="726.500" y="282.500"/>
<use href="#dot" x="581" y="296"/><use href="#person" x="594" y="296"/><use href="#box" x="607.500" y="296"/><use href="#box" x="620.500" y="296"/><use href="#box" x="634" y="296"/><use href="#plus" x="647" y="296"/><use href="#person" x="660.500" y="296"/><use href="#box" x="673.500" y="296"/><use href="#box" x="686.500" y="296"/><use href="#box" x="700" y="296"/><use href="#box" x="713" y="296"/><use href="#box" x="726.500" y="296"/>
<use href="#box" x="581" y="309"/><use href="#box" x="594" y="309"/><use href="#box" x="607.500" y="309"/><use href="#person" x="620.500" y="309"/><use href="#dot" x="634" y="309"/><use href="#dot" x="647" y="309"/><use href="#box" x="660.500" y="309"/><use href="#plus" x="673.500" y="309"/><use href="#box" x="686.500" y="309"/><use href="#dot" x="700" y="309"/><use href="#box" x="713" y="309"/><use href="#box" x="726.500" y="309"/>
<use href="#plus" x="581" y="322"/><use href="#box" x="594" y="322"/><use href="#box" x="607.500" y="322"/><use href="#box" x="620.500" y="322"/><use href="#box" x="634" y="322"/><use href="#dot" x="647" y="322"/><use href="#dot" x="660.500" y="322"/><use href="#dot" x="673.500" y="322"/><use href="#box" x="686.500" y="322"/><use href="#dot" x="700" y="322"/><use href="#box" x="713" y="322"/><use href="#dot" x="726.500" y="322"/>
</g>
<!-- Ressource -->
<text class="l" x="575" y="348" textLength="30" lengthAdjust="spacingAndGlyphs">Ressource</text>
<text class="i" x="577" y="359" textLength="25" lengthAdjust="spacingAndGlyphs">couleurs</text><text class="i" x="614" y="359" textLength="12" lengthAdjust="spacingAndGlyphs">bleu</text><text class="i" x="651" y="359" textLength="12" lengthAdjust="spacingAndGlyphs">vert</text><text class="i" x="688" y="359" textLength="13" lengthAdjust="spacingAndGlyphs">rose</text>
<text class="i" x="577" y="371" textLength="18" lengthAdjust="spacingAndGlyphs">rouge</text><text class="i" x="614" y="371" textLength="21" lengthAdjust="spacingAndGlyphs">orange</text><text class="i" x="651" y="371" textLength="24" lengthAdjust="spacingAndGlyphs">pourpre</text><text class="i" x="688" y="371" textLength="32" lengthAdjust="spacingAndGlyphs">entrer le ...</text>
<text class="l" x="575" y="383" textLength="67" lengthAdjust="spacingAndGlyphs">Resources(Document)</text>
<text class="i" x="577" y="394" textLength="32" lengthAdjust="spacingAndGlyphs">Gloria Te...</text><text class="i" x="614" y="394" textLength="32" lengthAdjust="spacingAndGlyphs">Sarah Te...</text><text class="i" x="651" y="394" textLength="32" lengthAdjust="spacingAndGlyphs">Murray T...</text><text class="i" x="688" y="394" textLength="32" lengthAdjust="spacingAndGlyphs">David Te...</text>
<text class="i" x="577" y="406" textLength="32" lengthAdjust="spacingAndGlyphs">Richard T...</text><text class="i" x="614" y="406" textLength="25" lengthAdjust="spacingAndGlyphs">Jill Team</text>

<!-- status bar -->
<rect x="0" y="415" width="750" height="17" fill="#5a6378"/>
<text x="4" y="426" font-size="7.600" fill="#c8ccd6" text-decoration="underline" textLength="89" lengthAdjust="spacingAndGlyphs">https://www.edrawsoft.com/fr/</text>
<rect x="619" y="422.500" width="4" height="1" fill="#c4c8d2"/>
<rect x="627" y="422.500" width="45" height="1" fill="#c4c8d2"/><rect x="636" y="419.500" width="3" height="7" fill="#eceef2"/>
<path d="M675 423h5M677.500 420.500v5" stroke="#c4c8d2" stroke-width=".9"/>
<text x="687" y="426" font-size="7.200" fill="#c4c8d2">85%</text>
<rect x="706" y="422.500" width="2" height=".8" fill="#8a90a0"/>
<rect x="714" y="419.500" width="7" height="7" fill="none" stroke="#d0d4dc" stroke-width=".8"/><rect x="716" y="421.500" width="3" height="3" fill="#d0d4dc"/>
<rect x="724" y="419.500" width="7" height="7" fill="none" stroke="#9aa0ae" stroke-width=".8"/><path d="M727.500 419.500v7M724 423h7" stroke="#9aa0ae" stroke-width=".7"/>
<path d="M733 418.500h9v4h-9zM737.500 422.500v3M735 426h5" fill="#d0d4dc" stroke="#d0d4dc" stroke-width=".7"/>
<g fill="#c4c8d2"><rect x="748" y="423" width="1" height="1"/><rect x="746" y="425.500" width="1" height="1"/><rect x="748" y="425.500" width="1" height="1"/><rect x="744" y="428" width="1" height="1"/><rect x="746" y="428" width="1" height="1"/><rect x="748" y="428" width="1" height="1"/></g>
</svg>
</body></html>
